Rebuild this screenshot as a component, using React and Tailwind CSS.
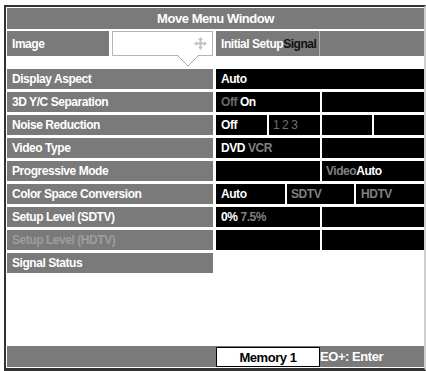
const GRAY = 'bg-[#7a7a7a]';

function Label({ children, dim }) {
  return (
    <div className={`w-[206px] ${GRAY} pl-[5px] flex items-center ${dim ? 'text-[#9d9d9d]' : 'text-white'}`}>
      {children}
    </div>
  );
}

function Cell({ children, pad = 'pl-[5px]' }) {
  return <div className={`bg-black flex items-center whitespace-nowrap ${pad}`}>{children}</div>;
}

const dim = 'text-[#808080]';

function MoveIcon() {
  return (
    <svg width="13" height="13" viewBox="0 0 13 13" fill="#c2c2c2">
      <rect x="5.5" y="3" width="2" height="7" />
      <rect x="3" y="5.5" width="7" height="2" />
      <polygon points="6.5,0 9,3 4,3" />
      <polygon points="6.5,13 9,10 4,10" />
      <polygon points="0,6.5 3,4 3,9" />
      <polygon points="13,6.5 10,4 10,9" />
    </svg>
  );
}

export default function App() {
  return (
    <div className="w-[426px] h-[371px] bg-white overflow-hidden pt-[5px] pl-[4px] font-['Liberation_Sans',Arial,sans-serif] font-bold text-[12px] tracking-[-0.45px] leading-none">
      <div className="w-[422px] h-[366px] border-t-2 border-l-2 border-b-[3px] border-r-2 border-t-[#333] border-l-[#333] border-b-[#333] border-r-[#cfcfcf] pt-[1px] pl-[1px] flex flex-col">
        {/* title */}
        <div className={`h-[21px] ${GRAY} text-white text-[13px] flex items-center justify-center`}>
          Move Menu Window
        </div>

        {/* image row */}
        <div className="relative h-[25px] mt-[2px] flex gap-[3px]">
          <div className={`w-[102px] ${GRAY} text-white pl-[5px] flex items-center`}>Image</div>
          <div className="w-[101px] bg-white border border-[#b5b5b5] flex items-center justify-end pr-[5px]">
            <MoveIcon />
          </div>
          <div className={`flex-1 ${GRAY} grid grid-cols-[104px_1fr]`}>
            <div className="border-r border-[#b0b0b0] flex items-center pl-[5px] whitespace-nowrap">
              <span className="text-white">Initial Setup</span>
              <span className="text-[#111]">Signal</span>
            </div>
            <div />
          </div>
          <svg className="absolute left-[170px] top-[23px]" width="22" height="13" viewBox="0 0 22 13">
            <polygon points="0,0 11,12 22,0" fill="white" />
            <polyline points="0,1 11,12 22,1" fill="none" stroke="#a8a8a8" strokeWidth="1" />
          </svg>
        </div>

        {/* settings rows */}
        <div className="mt-[13px] flex flex-col gap-[3px]">
          <div className="h-[20px] flex gap-[3px]">
            <Label>Display Aspect</Label>
            <div className="flex-1 grid grid-cols-1">
              <Cell><span className="text-white">Auto</span></Cell>
            </div>
          </div>

          <div className="h-[20px] flex gap-[3px]">
            <Label>3D Y/C Separation</Label>
            <div className="flex-1 grid grid-cols-[104px_1fr] gap-[2px]">
              <Cell><span className="text-[#6a6a6a]">Off</span><span className="text-white ml-[3px]">On</span></Cell>
              <Cell />
            </div>
          </div>

          <div className="h-[20px] flex gap-[3px]">
            <Label>Noise Reduction</Label>
            <div className="flex-1 grid grid-cols-[51px_51px_50px_1fr] gap-[2px]">
              <Cell><span className="text-white">Off</span></Cell>
              <Cell pad="pl-[4px]"><span className="text-[#707070] font-normal">1 2 3</span></Cell>
              <Cell />
              <Cell />
            </div>
          </div>

          <div className="h-[20px] flex gap-[3px]">
            <Label>Video Type</Label>
            <div className="flex-1 grid grid-cols-[104px_1fr] gap-[2px]">
              <Cell><span className="text-white">DVD</span><span className={`${dim} ml-[3px]`}>VCR</span></Cell>
              <Cell />
            </div>
          </div>

          <div className="h-[20px] flex gap-[3px]">
            <Label>Progressive Mode</Label>
            <div className="flex-1 grid grid-cols-[104px_1fr] gap-[2px]">
              <Cell />
              <Cell pad="pl-[4px]"><span className={dim}>Video</span><span className="text-white">Auto</span></Cell>
            </div>
          </div>

          <div className="h-[20px] flex gap-[3px]">
            <Label>Color Space Conversion</Label>
            <div className="flex-1 grid grid-cols-[69px_67px_1fr] gap-[2px]">
              <Cell><span className="text-white">Auto</span></Cell>
              <Cell pad="pl-[4px]"><span className={dim}>SDTV</span></Cell>
              <Cell><span className={dim}>HDTV</span></Cell>
            </div>
          </div>

          <div className="h-[20px] flex gap-[3px]">
            <Label>Setup Level (SDTV)</Label>
            <div className="flex-1 grid grid-cols-[104px_1fr] gap-[2px]">
              <Cell><span className="text-white">0%</span><span className={`${dim} ml-[3px]`}>7.5%</span></Cell>
              <Cell />
            </div>
          </div>

          <div className="h-[20px] flex gap-[3px]">
            <Label dim>Setup Level (HDTV)</Label>
            <div className="flex-1 grid grid-cols-[104px_1fr] gap-[2px]">
              <Cell />
              <Cell />
            </div>
          </div>

          <div className="h-[20px] flex gap-[3px]">
            <Label>Signal Status</Label>
            <div className="flex-1" />
          </div>
        </div>

        <div className="flex-1" />

        {/* bottom bar */}
        <div className={`h-[21px] ${GRAY} flex items-end pl-[209px]`}>
          <div className="w-[104px] h-[20px] bg-white border border-black text-black text-[13px] flex items-center justify-center">
            Memory 1
          </div>
          <div className="h-full flex items-center text-white text-[13px] whitespace-nowrap">
            EO+: Enter
          </div>
        </div>
        <div className="h-[1px]" />
      </div>
    </div>
  );
}
